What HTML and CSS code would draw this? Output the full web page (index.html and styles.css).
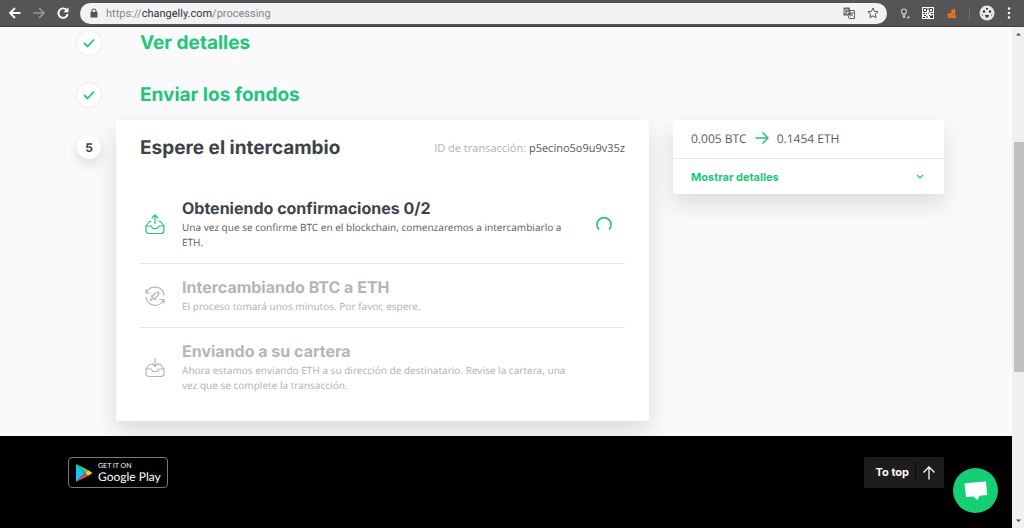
FILE: index.html
```
<!DOCTYPE html>
<html lang="es">

<head>
    <meta charset="UTF-8">
    <meta name="viewport" content="width=device-width, initial-scale=1.0">
    <title>Changelly</title>
    <link rel="stylesheet" href="styles.css">
</head>

<body>

    <!-- Browser toolbar -->
    <div class="toolbar">
        <button class="tool" aria-label="Atrás">
            <svg width="14" height="14" viewBox="0 0 14 14" fill="none" stroke="#fff" stroke-width="1.8"><path d="M12.500 7H2M7 2L2 7l5 5" /></svg>
        </button>
        <button class="tool tool-off" aria-label="Adelante">
            <svg width="14" height="14" viewBox="0 0 14 14" fill="none" stroke="#999" stroke-width="1.600"><path d="M1.500 7H12M7 2l5 5-5 5" /></svg>
        </button>
        <button class="tool" aria-label="Recargar">
            <svg width="14" height="14" viewBox="0 0 14 14" fill="none" stroke="#fff" stroke-width="1.900"><path d="M11 4.500A4.700 4.700 0 1 0 11.700 8" /><path d="M12.500 1.200v5H7.500z" fill="#fff" stroke="none" /></svg>
        </button>
        <div class="address">
            <svg width="8" height="10" viewBox="0 0 8 10"><path d="M2 4.500V3a2 2 0 0 1 4 0v1.500" fill="none" stroke="#555" stroke-width="1.200" /><rect x="0.500" y="4" width="7" height="5.500" rx="0.600" fill="#555" /></svg>
            <span class="url">https://<b>changelly.com</b>/processing</span>
            <button class="tool" aria-label="Traducir">
                <svg width="12" height="12" viewBox="0 0 12 12"><path d="M4 3.500h7.500v8H6z" fill="#fff" stroke="#666" /><path d="M0.500 0.500h6l2 8h-8z" fill="#666" /><path d="M5.200 3.300A2 2 0 1 0 5.500 5H3.800" fill="none" stroke="#eee" stroke-width=".9" /><path d="M7.500 6h3.500M9.300 5v1c0 2-1 3-1.800 3.500M8.500 7.500c.5 1 1 1.500 2 2" fill="none" stroke="#666" stroke-width=".8" /></svg>
            </button>
            <button class="tool" aria-label="Favorito">
                <svg width="12" height="12" viewBox="0 0 12 12" fill="none" stroke="#555"><path d="M6 1l1.500 3.300 3.500.4-2.600 2.400.7 3.600L6 8.900 2.900 10.700l.7-3.600L1 4.700l3.500-.4z" /></svg>
            </button>
        </div>
        <div class="extensions">
            <svg width="10" height="11" viewBox="0 0 10 11" fill="none" stroke="#ccc" stroke-width="1.100"><circle cx="4" cy="3.500" r="2.500" /><path d="M3 6l.5 3.500h1L5 6M7 9l1 1 1.500-1.500" /></svg>
            <svg width="12" height="12" viewBox="0 0 12 12"><rect width="12" height="12" fill="#fff" /><path d="M1.500 1.500h3v3h-3zM7.500 1.500h3v3h-3z" fill="none" stroke="#333" stroke-width=".9" /><path d="M5.500 1h1v2h-1zM1 6h2v1H1zM4 6h1v1H4zM6 5.500h1.500v1H6zM9 6h2v1H9zM2 8h2v1H2zM1 10h2v1H1zM4 9.500h2v1H4zM7 8h1v1H7zM8 9l3-1v3H8z" fill="#333" /></svg>
            <svg width="11" height="11" viewBox="0 0 11 11"><path d="M1 6.500l2.500-1.500L5 5.500 5.500 2 8 1l1.500 1-.5 3 1 5H1.500L2.500 8z" fill="#e8771c" /><path d="M4 9.500l1-2.500M7.500 5v3" stroke="#a8520d" stroke-width=".7" fill="none" /></svg>
            <span class="divider"></span>
            <svg width="16" height="16" viewBox="0 0 16 16"><circle cx="8" cy="8" r="7.500" fill="#e6e6e6" /><circle cx="5" cy="6.500" r="1.200" fill="#333" /><circle cx="11" cy="6.500" r="1.200" fill="#333" /><path d="M7 3h2v1.500H7zM6 10h4l-1 2.500H7zM2.500 9l1.500 1-.5 1zM13.500 9L12 10l.5 1z" fill="#333" /></svg>
            <svg width="4" height="14" viewBox="0 0 4 14" fill="#fff"><circle cx="2" cy="2.500" r="1.200" /><circle cx="2" cy="7" r="1.200" /><circle cx="2" cy="11.500" r="1.200" /></svg>
        </div>
    </div>

    <div class="window">
        <div class="page">

            <main class="content">
                <section class="steps">
                    <div class="step">
                        <span class="badge"><svg width="12" height="10" viewBox="0 0 12 10" fill="none" stroke="#22c67a" stroke-width="1.800"><path d="M1 5l3.500 3.500L11 1.500" /></svg></span>
                        <h2 class="step-title">Ver detalles</h2>
                    </div>
                    <div class="step">
                        <span class="badge"><svg width="12" height="10" viewBox="0 0 12 10" fill="none" stroke="#22c67a" stroke-width="1.800"><path d="M1 5l3.500 3.500L11 1.500" /></svg></span>
                        <h2 class="step-title">Enviar los fondos</h2>
                    </div>
                    <div class="step step-current">
                        <span class="badge badge-current">5</span>
                        <div class="card">
                            <div class="card-head">
                                <h2 class="card-title">Espere el intercambio</h2>
                                <span class="transaction">ID de transacción: <b>p5ecino5o9u9v35z</b></span>
                            </div>

                            <div class="stage stage-active">
                                <svg class="stage-icon" width="20" height="20" viewBox="0 0 20 20" fill="none" stroke="currentColor" stroke-width="1.200" stroke-linecap="round" stroke-linejoin="round"><path d="M10 9.500V1M7 4l3-3 3 3M6 7.500H4.500L1 12M14 7.500h1.500L19 12M1 12h5c.8 0 1 2.500 2.500 2.500h3c1.500 0 1.700-2.500 2.500-2.500h5v4.500a3 3 0 0 1-3 3H4a3 3 0 0 1-3-3z" /></svg>
                                <div class="stage-text">
                                    <h3>Obteniendo confirmaciones 0/2</h3>
                                    <p>Una vez que se confirme BTC en el blockchain, comenzaremos a intercambiarlo a ETH.</p>
                                </div>
                                <svg class="spinner" width="16" height="16" viewBox="0 0 16 16" fill="none" stroke="currentColor" stroke-width="1.700"><path d="M3 13.500A7 7 0 1 1 13 13.500" /></svg>
                            </div>

                            <div class="stage">
                                <svg class="stage-icon" width="20" height="20" viewBox="0 0 20 20" fill="none" stroke="currentColor" stroke-width="1.200" stroke-linecap="round" stroke-linejoin="round"><path d="M1 3.500v3.500h4M1.500 6.500A9.200 9.200 0 0 1 19 9M19 17v-3.500h-4M18.500 14A9.200 9.200 0 0 1 1 11" /><path d="M14 6l-3.500 1-3.500 3.500 2.500 2.500 3.500-3.500zM8 9.500l-2 .5M10.500 12l-.5 2M6.500 12.500l-1 2 2-1" /></svg>
                                <div class="stage-text">
                                    <h3>Intercambiando BTC a ETH</h3>
                                    <p>El proceso tomará unos minutos. Por favor, espere.</p>
                                </div>
                            </div>

                            <div class="stage">
                                <svg class="stage-icon" width="20" height="20" viewBox="0 0 20 20" fill="none" stroke="currentColor" stroke-width="1.200" stroke-linecap="round" stroke-linejoin="round"><path d="M10 1v8.500M7 6.500l3 3 3-3M6 7.500H4.500L1 12M14 7.500h1.500L19 12M1 12h5c.8 0 1 2.500 2.500 2.500h3c1.500 0 1.700-2.500 2.500-2.500h5v4.500a3 3 0 0 1-3 3H4a3 3 0 0 1-3-3z" /></svg>
                                <div class="stage-text">
                                    <h3>Enviando a su cartera</h3>
                                    <p>Ahora estamos enviando ETH a su dirección de destinatario. Revise la cartera, una vez que se complete la transacción.</p>
                                </div>
                            </div>
                        </div>
                    </div>
                </section>

                <aside class="summary">
                    <div class="amounts">
                        <span>0.005 BTC</span>
                        <svg width="14" height="14" viewBox="0 0 14 14" fill="none" stroke="#22c67a" stroke-width="1.500"><path d="M0.500 7H13M7.500 1.500L13 7l-5.500 5.500" /></svg>
                        <span>0.1454 ETH</span>
                    </div>
                    <button class="show-details">
                        Mostrar detalles
                        <svg width="8" height="6" viewBox="0 0 8 6" fill="none" stroke="currentColor" stroke-width="1.200"><path d="M1 1l3 3 3-3" /></svg>
                    </button>
                </aside>
            </main>

            <footer class="footer">
                <div class="footer-inner">
                    <a class="play" href="#">
                        <svg width="18" height="20" viewBox="0 0 18 20"><path d="M1 1v18l9-9z" fill="#16c4f0" /><path d="M1 1l9 9 3-3z" fill="#25d884" /><path d="M1 19l9-9 3 3z" fill="#e9445a" /><path d="M13 7l4.500 3-4.500 3-3-3z" fill="#fdc81c" /></svg>
                        <span class="play-text"><small>GET IT ON</small>Google Play</span>
                    </a>
                    <button class="to-top">
                        <span>To top</span>
                        <svg width="14" height="14" viewBox="0 0 14 14" fill="none" stroke="#fff" stroke-width="1.300"><path d="M7 13.500V1M1.500 6.500L7 1l5.500 5.500" /></svg>
                    </button>
                </div>
            </footer>

            <button class="chat" aria-label="Chat">
                <svg width="24" height="20" viewBox="0 0 24 20"><path d="M0.500 2.200L22 0.500 23.200 14l-7.700.8-2.300 4.400-3.400-3.700-7.800.5z" fill="#fff" /></svg>
            </button>
        </div>

        <!-- Window scrollbar -->
        <div class="scrollbar">
            <svg width="7" height="4" viewBox="0 0 7 4"><path d="M1 3.500L3.500 1 6 3.500z" fill="#444" /></svg>
            <div class="track"><div class="thumb"></div></div>
            <svg width="7" height="4" viewBox="0 0 7 4"><path d="M1 .5L3.500 3 6 .5z" fill="#444" /></svg>
        </div>
    </div>

</body>

</html>
```
FILE: styles.css
```
* {
    box-sizing: border-box;
}

body {
    margin: 0;
    height: 100vh;
    display: flex;
    flex-direction: column;
    overflow: hidden;
    font-family: "Open Sans", "Noto Sans", sans-serif;
    font-size: 11px;
    line-height: 15px;
    color: #565a5e;
    text-rendering: geometricPrecision;
}

h2,
h3,
p {
    margin: 0;
}

button {
    border: none;
    background: none;
    padding: 0;
    cursor: pointer;
}

svg {
    display: block;
    flex-shrink: 0;
}
/* Browser toolbar */

.toolbar {
    display: flex;
    align-items: center;
    gap: 10px;
    height: 27px;
    padding: 0 13px 0 8px;
    background-color: #555;
    border-bottom: 1px solid #404040;
}

.address {
    flex: 1;
    display: flex;
    align-items: center;
    gap: 12px;
    height: 21px;
    padding: 0 8px 0 10px;
    border-radius: 11px;
    background-color: #f0f2f4;
}

.url {
    flex: 1;
    margin-left: -4px;
    font-family: Roboto, sans-serif;
    font-size: 11px;
    color: #85888b;
}

.url b {
    font-weight: normal;
    color: #333;
}

.extensions {
    display: flex;
    align-items: center;
    gap: 12px;
    padding-left: 3px;
}

.divider {
    width: 1px;
    height: 13px;
    margin-right: -3px;
    background-color: #707070;
}
/* Page area and scrollbar */

.window {
    flex: 1;
    display: flex;
    min-height: 0;
}

.page {
    flex: 1;
    display: flex;
    flex-direction: column;
    position: relative;
    overflow: hidden;
    background-color: #fafafa;
}

.scrollbar {
    width: 12px;
    display: flex;
    flex-direction: column;
    align-items: center;
    padding: 5px 0;
    background-color: #f0f0f0;
}

.track {
    flex: 1;
    width: 100%;
    padding: 106px 0 0 2px;
}

.thumb {
    height: 61%;
    background-color: #c1c1c1;
}
/* Steps */

.content {
    display: flex;
    align-items: flex-start;
    gap: 24px;
    width: 100%;
    max-width: 876px;
    margin: 0 auto;
    padding-bottom: 15px;
}

.steps {
    flex: 1;
}

.step {
    display: flex;
    align-items: center;
    height: 32px;
    margin-bottom: 20px;
}

.step-current {
    align-items: flex-start;
    height: auto;
    margin: -11px 0 0;
}

.badge {
    display: flex;
    align-items: center;
    justify-content: center;
    flex-shrink: 0;
    width: 24px;
    height: 24px;
    margin: 0 15px 0 9px;
    border-radius: 50%;
    background-color: #fff;
    box-shadow: 0 0 3px rgba(0, 0, 0, 0.12);
}

.badge-current {
    margin-top: 15px;
    font-family: Inter, sans-serif;
    font-size: 12px;
    font-weight: 700;
    color: #3d4347;
    box-shadow: 0 5px 12px rgba(0, 0, 0, 0.12);
}

.step-title,
.card-title {
    font-family: Inter, sans-serif;
    font-size: 19px;
    line-height: 32px;
    font-weight: 700;
}

.step-title {
    margin-left: 24px;
    color: #22c67a;
}

.card-title {
    color: #3d4347;
}

.card {
    flex: 1;
    padding: 12px 24px 15px;
    background-color: #fff;
    border-radius: 2px;
    box-shadow: 0 10px 24px rgba(0, 0, 0, 0.13);
}

.card-head {
    display: flex;
    align-items: center;
    justify-content: space-between;
    margin-bottom: 21px;
}

.transaction {
    color: #b0b0b0;
}

.transaction b {
    font-weight: normal;
    color: #565a5e;
}
/* Exchange stages */

.stage {
    display: flex;
    align-items: center;
    padding: 13px 0;
    border-bottom: 1px solid #e6e6e6;
    color: #b5b5b5;
}

.stage:last-child {
    border-bottom: none;
}

.stage-icon {
    margin: 0 17px 0 5px;
}

.stage-text {
    flex: 1;
}

.stage h3 {
    margin-bottom: 2px;
    font-family: Inter, sans-serif;
    font-size: 16px;
    line-height: 20px;
    font-weight: 700;
}

.stage p {
    max-width: 400px;
    font-family: "Noto Sans", sans-serif;
    font-size: 10px;
}

.stage-active {
    color: #22c67a;
}

.stage-active h3 {
    color: #3d4347;
}

.stage-active p {
    color: #63676a;
}

.spinner {
    margin-right: 13px;
}
/* Summary card */

.summary {
    width: 271px;
    margin-top: 93px;
    background-color: #fff;
    border-radius: 2px;
    box-shadow: 0 10px 24px rgba(0, 0, 0, 0.13);
}

.amounts {
    display: flex;
    align-items: center;
    gap: 8px;
    height: 39px;
    padding: 0 18px 2px;
    border-bottom: 1px solid #e6e6e6;
    font-size: 12px;
}

.show-details {
    display: flex;
    align-items: center;
    justify-content: space-between;
    width: 100%;
    height: 35px;
    padding: 0 20px 0 18px;
    font-family: Inter, sans-serif;
    font-size: 11px;
    font-weight: 700;
    color: #22c67a;
}
/* Footer */

.footer {
    flex: 1;
    background-color: #000;
}

.footer-inner {
    display: flex;
    justify-content: space-between;
    max-width: 876px;
    margin: 0 auto;
    padding-top: 21px;
}

.play {
    display: flex;
    align-items: center;
    gap: 5px;
    height: 31px;
    padding: 0 6px;
    border: 1px solid #777;
    border-radius: 4px;
    color: #fff;
    text-decoration: none;
}

.play-text {
    font-family: Lato, sans-serif;
    font-size: 12px;
    line-height: 14px;
}

.play-text small {
    display: block;
    font-size: 7px;
    line-height: 8px;
}

.to-top {
    display: flex;
    align-items: center;
    height: 31px;
    padding: 0 8px 0 12px;
    border-radius: 2px;
    background-color: #1c1c1c;
    color: #fff;
    font-family: Inter, sans-serif;
    font-size: 11px;
    font-weight: 700;
}

.to-top span {
    padding-right: 6px;
    margin-right: 6px;
    border-right: 1px solid #0c0c0c;
    line-height: 19px;
}

.chat {
    position: absolute;
    right: 14px;
    bottom: 15px;
    display: flex;
    align-items: center;
    justify-content: center;
    width: 45px;
    height: 45px;
    border-radius: 50%;
    background-color: #15cf74;
}
```
